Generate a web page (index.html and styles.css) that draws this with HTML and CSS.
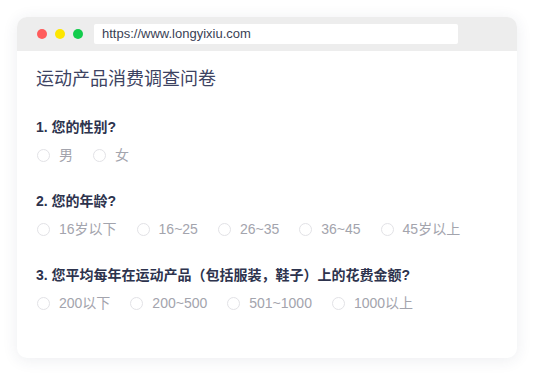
FILE: index.html
```html
<!DOCTYPE html>
<html lang="zh-CN">
<head>
    <meta charset="UTF-8">
    <meta name="viewport" content="width=device-width, initial-scale=1.0">
    <title>运动产品消费调查问卷</title>
    <link rel="stylesheet" href="styles.css">
</head>
<body>
    <div class="browser">
        <div class="browser-bar">
            <span class="dot dot-red"></span>
            <span class="dot dot-yellow"></span>
            <span class="dot dot-green"></span>
            <div class="address">https://www.longyixiu.com</div>
        </div>
        <div class="survey">
            <h1 class="survey-title">运动产品消费调查问卷</h1>

            <div class="question">
                <h2>1. 您的性别?</h2>
                <div class="options">
                    <label class="option"><span class="radio"></span>男</label>
                    <label class="option"><span class="radio"></span>女</label>
                </div>
            </div>

            <div class="question">
                <h2>2. 您的年龄?</h2>
                <div class="options">
                    <label class="option"><span class="radio"></span>16岁以下</label>
                    <label class="option"><span class="radio"></span>16~25</label>
                    <label class="option"><span class="radio"></span>26~35</label>
                    <label class="option"><span class="radio"></span>36~45</label>
                    <label class="option"><span class="radio"></span>45岁以上</label>
                </div>
            </div>

            <div class="question">
                <h2>3. 您平均每年在运动产品（包括服装，鞋子）上的花费金额?</h2>
                <div class="options">
                    <label class="option"><span class="radio"></span>200以下</label>
                    <label class="option"><span class="radio"></span>200~500</label>
                    <label class="option"><span class="radio"></span>501~1000</label>
                    <label class="option"><span class="radio"></span>1000以上</label>
                </div>
            </div>
        </div>
    </div>
</body>
</html>
```

FILE: styles.css
```css
body {
    font-family: "Liberation Sans", "Noto Sans CJK SC", sans-serif;
    margin: 0;
    padding: 17px;
    background-color: #fff;
}

.browser {
    width: 500px;
    border-radius: 10px;
    background-color: #fff;
    box-shadow: 0 2px 16px rgba(40, 50, 90, 0.09);
    overflow: hidden;
}

.browser-bar {
    height: 34px;
    background-color: #ededed;
    display: flex;
    align-items: center;
    padding: 0 20px;
}

.dot {
    width: 10px;
    height: 10px;
    border-radius: 50%;
    margin-right: 8px;
}

.dot-red { background-color: #ff5b5b; }
.dot-yellow { background-color: #fde600; }
.dot-green { background-color: #12cc4c; }

.address {
    width: 356px;
    height: 20px;
    margin-left: 3px;
    padding-left: 8px;
    background-color: #fff;
    border-radius: 2px;
    font-size: 13px;
    line-height: 20px;
    color: #3a3f55;
}

.survey {
    padding: 16px 19px 45px;
}

.survey-title {
    margin: 0 0 26px;
    font-size: 18px;
    line-height: 24px;
    font-weight: normal;
    color: #3d4362;
}

.question {
    margin-bottom: 26px;
}

.question:last-child {
    margin-bottom: 0;
}

.question h2 {
    margin: 0 0 8px;
    font-size: 14px;
    line-height: 20px;
    font-weight: bold;
    color: #2d334d;
}

.options {
    display: flex;
}

.option {
    display: flex;
    align-items: center;
    margin-right: 19px;
    font-size: 14px;
    line-height: 20px;
    color: #a3a4ad;
}

.radio {
    width: 11px;
    height: 11px;
    border: 1px solid #e2e2e6;
    border-radius: 50%;
    margin: 0 9px 0 1px;
}
```
